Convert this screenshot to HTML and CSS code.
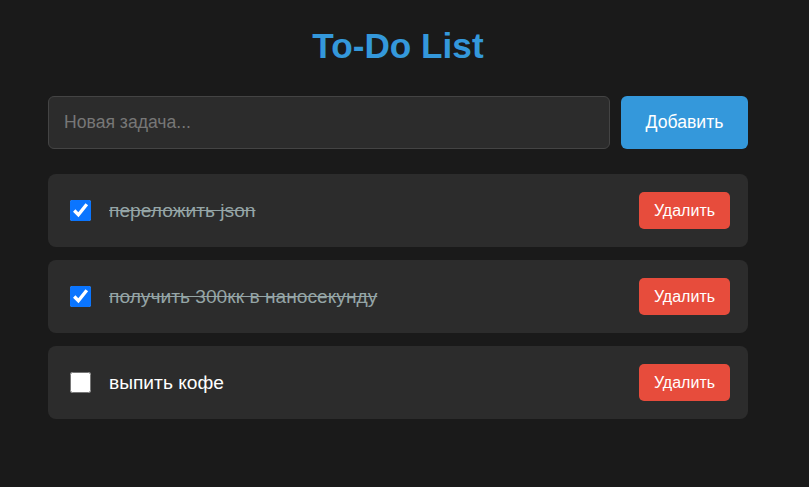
FILE: index.html
```html
<!DOCTYPE html>
<html lang="ru">
<head>
<meta charset="utf-8">
<title>To-Do List</title>
<link rel="stylesheet" href="styles.css">
</head>
<body>
<div class="container">
  <h1 class="title">To-Do List</h1>
  <div class="add-row">
    <input class="task-input" type="text" placeholder="Новая задача...">
    <button class="add-btn">Добавить</button>
  </div>
  <ul class="list">
    <li class="item done">
      <input type="checkbox" class="check" checked>
      <span class="text">переложить json</span>
      <button class="del-btn">Удалить</button>
    </li>
    <li class="item done">
      <input type="checkbox" class="check" checked>
      <span class="text">получить 300кк в наносекунду</span>
      <button class="del-btn">Удалить</button>
    </li>
    <li class="item">
      <input type="checkbox" class="check">
      <span class="text">выпить кофе</span>
      <button class="del-btn">Удалить</button>
    </li>
  </ul>
</div>
</body>
</html>
```
FILE: styles.css
```css
html, body {
  margin: 0;
  padding: 0;
  background: #1a1a1a;
  color: #ffffff;
  font-family: "Liberation Sans", Arial, sans-serif;
}
.container {
  width: 700px;
  padding: 0 0 0 48px;
}
.title {
  margin: 0;
  padding-top: 26px;
  height: 44px;
  line-height: 40px;
  text-align: center;
  color: #3498db;
  font-size: 35.2px;
  font-weight: bold;
  margin-bottom: 26px;
}
.add-row {
  display: flex;
  gap: 11px;
  margin-bottom: 25px;
}
.task-input {
  flex: 1;
  height: 53px;
  box-sizing: border-box;
  background: #2c2c2c;
  border: 1px solid #444;
  border-radius: 6px;
  color: #fff;
  font-family: inherit;
  font-size: 17.6px;
  padding: 0 15px;
  outline: none;
}
.task-input::placeholder {
  color: #777;
}
.add-btn {
  width: 127px;
  height: 53px;
  background: #3498db;
  color: #fff;
  border: none;
  border-radius: 6px;
  font-family: inherit;
  font-size: 17.6px;
}
.list {
  list-style: none;
  margin: 0;
  padding: 0;
  display: flex;
  flex-direction: column;
  gap: 13px;
}
.item {
  display: flex;
  align-items: center;
  background: #2c2c2c;
  border-radius: 8px;
  padding: 18px;
  height: 37px;
}
.check {
  width: 21px;
  height: 21px;
  margin: 0 18px 0 4px;
  accent-color: #0a75ff;
}
.text {
  flex: 1;
  font-size: 19.2px;
  color: #fff;
}
.done .text {
  color: #95a5a6;
  text-decoration: line-through;
}
.del-btn {
  height: 37px;
  width: 91px;
  background: #e74c3c;
  color: #fff;
  border: none;
  border-radius: 5px;
  font-family: inherit;
  font-size: 16px;
}
```
